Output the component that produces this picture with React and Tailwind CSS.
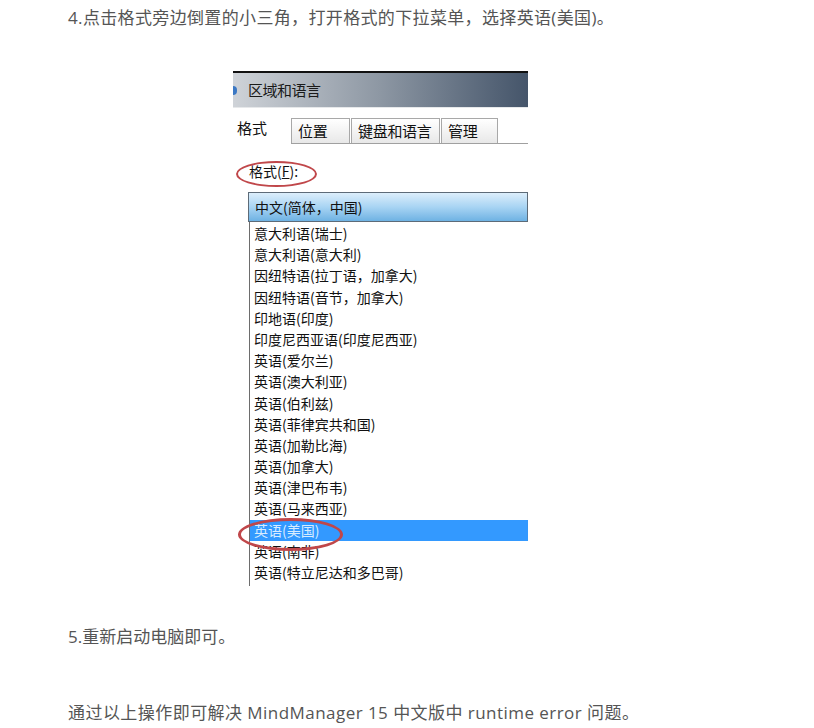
import React from 'react';

const items = [
  '意大利语(瑞士)',
  '意大利语(意大利)',
  '因纽特语(拉丁语，加拿大)',
  '因纽特语(音节，加拿大)',
  '印地语(印度)',
  '印度尼西亚语(印度尼西亚)',
  '英语(爱尔兰)',
  '英语(澳大利亚)',
  '英语(伯利兹)',
  '英语(菲律宾共和国)',
  '英语(加勒比海)',
  '英语(加拿大)',
  '英语(津巴布韦)',
  '英语(马来西亚)',
  '英语(美国)',
  '英语(南非)',
  '英语(特立尼达和多巴哥)',
];

const tabs = [
  { label: '位置', w: 'w-[59px]' },
  { label: '键盘和语言', w: 'w-[89px]' },
  { label: '管理', w: 'w-[57px]' },
];

const RegionDialog = () => {
  return (
    <div className="relative w-[295px] h-[515px] bg-white overflow-hidden font-['SimSun','Noto_Sans_CJK_SC',sans-serif] text-[#111]">
      {/* title bar */}
      <div className="border-t-2 border-[#111] h-[37px] flex items-center bg-gradient-to-r from-[#cfd3d8] via-[#8d97a3] to-[#45556a] border-b border-b-[#e6e8ea]">
        <div className="w-[4px] h-[9px] rounded-r-full bg-[#3b78c4]" />
        <span className="ml-[11px] text-[15px] tracking-[-0.5px] text-[#1a1a1a]">区域和语言</span>
      </div>

      {/* tabs */}
      <div className="mt-[9px] flex items-end h-[27px] bg-white">
        <div className="w-[58px] h-[27px] pl-[4px] text-[15px] leading-[22px]">格式</div>
        <div className="flex-1 flex items-end border-b border-[#a0a0a0] h-[26px]">
          {tabs.map((t) => (
            <div
              key={t.label}
              className={`${t.w} h-[25px] mr-[1px] border border-b-0 border-[#a8a8a8] bg-gradient-to-b from-white to-[#e8e8e8] pl-[6px] text-[15px] leading-[24px] tracking-[-0.3px]`}
            >
              {t.label}
            </div>
          ))}
        </div>
      </div>

      {/* label */}
      <div className="mt-[18px] ml-[16px] text-[14px] leading-[18px]">
        格式(<span className="underline">F</span>):
      </div>

      {/* selected box */}
      <div className="mt-[12px] ml-[15px] h-[30px] border border-[#5d6b78] bg-gradient-to-b from-[#dceefb] via-[#a8d4f3] to-[#6eb2e3] pl-[6px] flex items-center text-[14px]">
        中文(简体，中国)
      </div>

      {/* list */}
      <div className="ml-[16px] border-l border-[#6d6d6d] h-[400px] pt-[1px]">
        {items.map((it) => {
          const sel = it === '英语(美国)';
          return (
            <div
              key={it}
              className={`h-[21.2px] leading-[21px] pl-[4px] text-[14px] whitespace-nowrap ${
                sel ? 'bg-[#3399ff] text-[#d8ecff]' : ''
              }`}
            >
              {it}
            </div>
          );
        })}
      </div>

      {/* red marks */}
      <div className="absolute left-[3px] top-[90px] w-[81px] h-[26px] rounded-[50%] border-2 border-[#c0474a]" />
      <div className="absolute left-[5px] top-[447px] w-[105px] h-[33px] rounded-[50%] border-[3px] border-[#c0474a]" />
    </div>
  );
};

export default function App() {
  return (
    <div className="min-h-screen bg-white pl-[68px] pt-[6px] text-[#555] font-['Open_Sans','Noto_Sans_CJK_SC',sans-serif] text-[17px]">
      <p className="leading-[24px] tracking-[0.35px]">4.点击格式旁边倒置的小三角，打开格式的下拉菜单，选择英语(美国)。</p>
      <div className="mt-[41px] ml-[165px]">
        <RegionDialog />
      </div>
      <p className="mt-[39px] leading-[24px]">5.重新启动电脑即可。</p>
      <p className="mt-[52px] leading-[24px] tracking-[0.45px]">
        通过以上操作即可解决 MindManager 15 中文版中 runtime error 问题。
      </p>
    </div>
  );
}
